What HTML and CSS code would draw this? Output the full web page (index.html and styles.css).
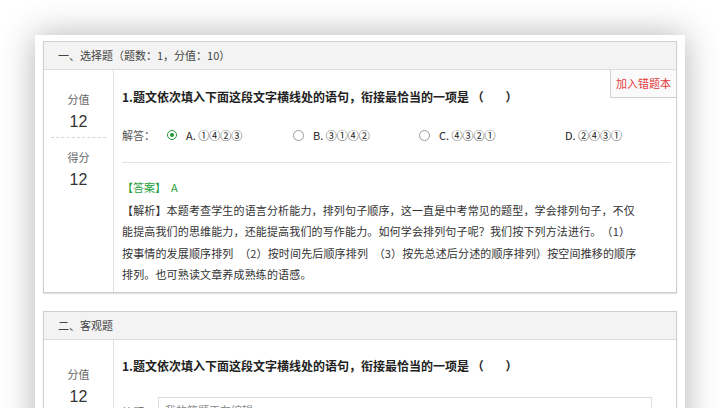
FILE: index.html
```html
<!DOCTYPE html>
<html lang="zh">
<head>
<meta charset="utf-8">
<title>作业详情</title>
<link rel="stylesheet" href="styles.css">
</head>
<body>
<div class="page">
  <section class="sec">
    <div class="sec-head">一、选择题（题数：1，分值：10）</div>
    <div class="sec-body">
      <div class="score">
        <div class="lbl">分值</div>
        <div class="num">12</div>
        <div class="dash"></div>
        <div class="lbl lbl-2">得分</div>
        <div class="num">12</div>
      </div>
      <div class="main">
        <a class="err-btn">加入错题本</a>
        <div class="q-title">1.题文依次填入下面这段文字横线处的语句，衔接最恰当的一项是&nbsp;（&nbsp;&nbsp;&nbsp;&nbsp;&nbsp;&nbsp;&nbsp;&nbsp;）</div>
        <div class="answer-row">
          <span class="ans-lbl">解答：</span>
          <label class="opt"><span class="radio checked"></span>A. ①④②③</label>
          <label class="opt"><span class="radio"></span>B. ③①④②</label>
          <label class="opt"><span class="radio"></span>C. ④③②①</label>
          <label class="opt"><span class="radio hidden"></span>D. ②④③①</label>
        </div>
        <div class="sep"></div>
        <div class="key">【答案】&nbsp;&nbsp;A</div>
        <p class="analysis">【解析】本题考查学生的语言分析能力，排列句子顺序，这一直是中考常见的题型，学会排列句子，不仅<br>能提高我们的思维能力，还能提高我们的写作能力。如何学会排列句子呢？我们按下列方法进行。　（1）<br>按事情的发展顺序排列　（2）按时间先后顺序排列　（3）按先总述后分述的顺序排列）按空间推移的顺序<br>排列。也可熟读文章养成熟练的语感。</p>
      </div>
    </div>
  </section>

  <section class="sec">
    <div class="sec-head">二、客观题</div>
    <div class="sec-body">
      <div class="score score-2">
        <div class="lbl">分值</div>
        <div class="num">12</div>
      </div>
      <div class="main main-2">
        <div class="q-title">1.题文依次填入下面这段文字横线处的语句，衔接最恰当的一项是&nbsp;（&nbsp;&nbsp;&nbsp;&nbsp;&nbsp;&nbsp;&nbsp;&nbsp;）</div>
        <div class="write-row">
          <span class="write-lbl">答题</span>
          <div class="write-box">我的答题正在编辑</div>
        </div>
      </div>
    </div>
  </section>
</div>
</body>
</html>
```

FILE: styles.css
```css
html, body {
  margin: 0;
  padding: 0;
  background: #ffffff;
  overflow: hidden;
  font-family: "Noto Sans CJK SC", "DejaVu Sans", sans-serif;
  color: #333333;
}

.page {
  margin: 35px 0 0 35px;
  width: 634px;
  min-height: 460px;
  padding: 6px 8px 0 8px;
  background: #ffffff;
  box-shadow: 0 0 32px rgba(0, 0, 0, 0.3);
}

.sec {
  border: 1px solid #cfcfcf;
  box-shadow: 0 1px 1px rgba(0, 0, 0, 0.12);
  margin-bottom: 18px;
  background: #ffffff;
}

.sec-head {
  height: 27px;
  line-height: 27px;
  padding-left: 14px;
  background: #f3f3f3;
  border-bottom: 1px solid #dcdcdc;
  font-size: 11px;
  color: #444444;
}

.sec-body {
  position: relative;
  display: flex;
}

.score {
  width: 69px;
  flex: none;
  border-right: 1px solid #e2e2e2;
  padding-top: 21px;
  text-align: center;
}

.score-2 {
  padding-top: 26px;
}

.lbl {
  font-size: 11px;
  line-height: 16px;
  color: #666666;
}

.lbl-2 {
  margin-top: 11px;
}

.num {
  margin-top: 5px;
  font-family: "Liberation Sans", Arial, sans-serif;
  font-size: 16px;
  line-height: 20px;
  color: #333333;
}

.dash {
  margin: 5px 7px 0 7px;
  border-top: 1px dashed #d6d6d6;
}

.main {
  flex: 1;
  padding: 19px 8px 7px 8px;
}

.main-2 {
  padding-top: 18px;
}

.err-btn {
  position: absolute;
  top: 0;
  right: 0;
  height: 27px;
  line-height: 27px;
  padding: 0 5px;
  background: #fafafa;
  border-left: 1px solid #cfcfcf;
  border-bottom: 1px solid #cfcfcf;
  color: #e4393c;
  font-size: 11px;
  cursor: pointer;
}

.q-title {
  font-size: 12px;
  line-height: 16px;
  font-weight: bold;
  color: #222222;
}

.answer-row {
  display: flex;
  align-items: center;
  margin-top: 22px;
  height: 16px;
  font-size: 11px;
}

.ans-lbl {
  width: 45px;
  color: #555555;
}

.opt {
  width: 126px;
  display: flex;
  align-items: center;
  color: #222222;
}

.radio {
  width: 9px;
  height: 9px;
  border: 1px solid #9a9a9a;
  border-radius: 50%;
  margin-right: 9px;
  flex: none;
  position: relative;
  background: #ffffff;
}

.radio.checked {
  border: 1.5px solid #1f9a33;
  width: 8px;
  height: 8px;
}

.radio.checked::after {
  content: "";
  position: absolute;
  left: 2px;
  top: 2px;
  width: 4px;
  height: 4px;
  border-radius: 50%;
  background: #1f9a33;
}

.radio.hidden {
  visibility: hidden;
}

.sep {
  margin-top: 19px;
  border-top: 1px solid #e3e3e3;
}

.key {
  margin-top: 16px;
  font-size: 11px;
  line-height: 16px;
  color: #23a03a;
}

.analysis {
  margin: 5px 0 0 0;
  font-size: 11px;
  line-height: 21.3px;
  letter-spacing: 0.15px;
  color: #333333;
}

.write-row {
  display: flex;
  align-items: flex-start;
  margin-top: 23px;
}

.write-lbl {
  width: 36px;
  padding-top: 7px;
  font-size: 11px;
  line-height: 16px;
  color: #555555;
}

.write-box {
  width: 480px;
  height: 28px;
  border: 1px solid #dddddd;
  padding: 4px 6px;
  font-size: 11px;
  line-height: 16px;
  color: #888888;
}
```
